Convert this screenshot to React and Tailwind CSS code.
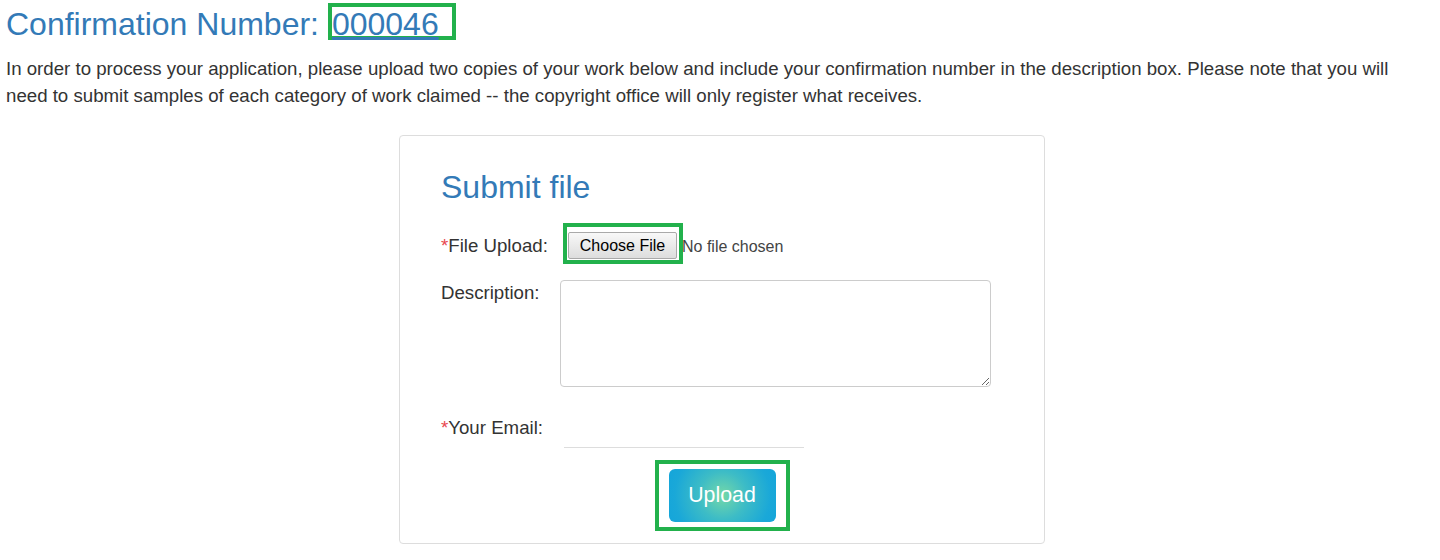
import React, { useState } from 'react';

const App = () => {
  const [description, setDescription] = useState('');
  const [email, setEmail] = useState('');

  return (
    <div className="min-h-screen bg-white pl-[6px] pr-[2px] font-['Liberation_Sans',Arial,sans-serif] text-[#333]">
      {/* Confirmation header */}
      <h3 className="mt-[3px] text-[32px] leading-[35px] font-normal text-[#337ab7]">
        Confirmation Number:{' '}
        <span className="inline-block h-[37px] border-4 border-[#22b14c] pr-[13px] underline">000046</span>
      </h3>

      <p className="mt-[14px] max-w-[1420px] text-[18.67px] leading-[26.67px]">
        In order to process your application, please upload two copies of your work below and include your confirmation number in the description box. Please note that you will need to submit samples of each category of work claimed -- the copyright office will only register what receives.
      </p>

      {/* Upload card */}
      <div className="mx-auto mt-[26px] w-[646px] rounded-[4px] border border-[#ddd] pt-[34px] pr-[41px] pb-[12px] pl-[41px]">
        <h3 className="text-[32px] leading-[35px] font-normal text-[#337ab7]">Submit file</h3>

        <div className="mt-[18px] flex items-start text-[18.67px] leading-[26.67px]">
          <label className="mt-[10px] w-[119px] shrink-0">
            <span className="text-[#e8474f]">*</span>File Upload:
          </label>
          <div className="ml-[3px] border-4 border-[#22b14c] pt-[5px] pr-[2px] pb-[1px] pl-[1px]">
            <div className="h-[27px] w-[109px] rounded-[2px] border border-[#a9a9a9] bg-[linear-gradient(#f8f8f8,#dddddd)] text-center text-[16px] leading-[25px] text-black">
              Choose File
            </div>
          </div>
          <span className="mt-[11px] ml-[-1px] text-[16px] leading-[25px] text-[#444]">No file chosen</span>
        </div>

        <div className="mt-[16px] flex items-start text-[18.67px] leading-[26.67px]">
          <label className="w-[119px] shrink-0">Description:</label>
          <textarea
            value={description}
            onChange={(e) => setDescription(e.target.value)}
            className="h-[107px] w-[431px] rounded-[4px] border border-[#ccc] px-3 py-2 text-[16px] outline-none"
          />
        </div>

        <div className="mt-[28px] flex items-start text-[18.67px] leading-[26.67px]">
          <label className="w-[119px] shrink-0">
            <span className="text-[#e8474f]">*</span>Your Email:
          </label>
          <input
            type="email"
            value={email}
            onChange={(e) => setEmail(e.target.value)}
            className="ml-[4px] h-[33px] w-[240px] border-b border-[#ddd] text-[16px] outline-none"
          />
        </div>

        <div className="mt-[12px] flex justify-center">
          <div className="border-4 border-[#22b14c] px-[10px] pt-[5px] pb-[5px]">
            <button
              type="button"
              className="h-[53px] w-[107px] rounded-[6px] bg-[radial-gradient(circle,#74d8a8_0%,#3dbcc6_40%,#1aa8d8_80%,#14a5da_100%)] text-[21.33px] text-white"
            >
              Upload
            </button>
          </div>
        </div>
      </div>
    </div>
  );
};

export default App;
